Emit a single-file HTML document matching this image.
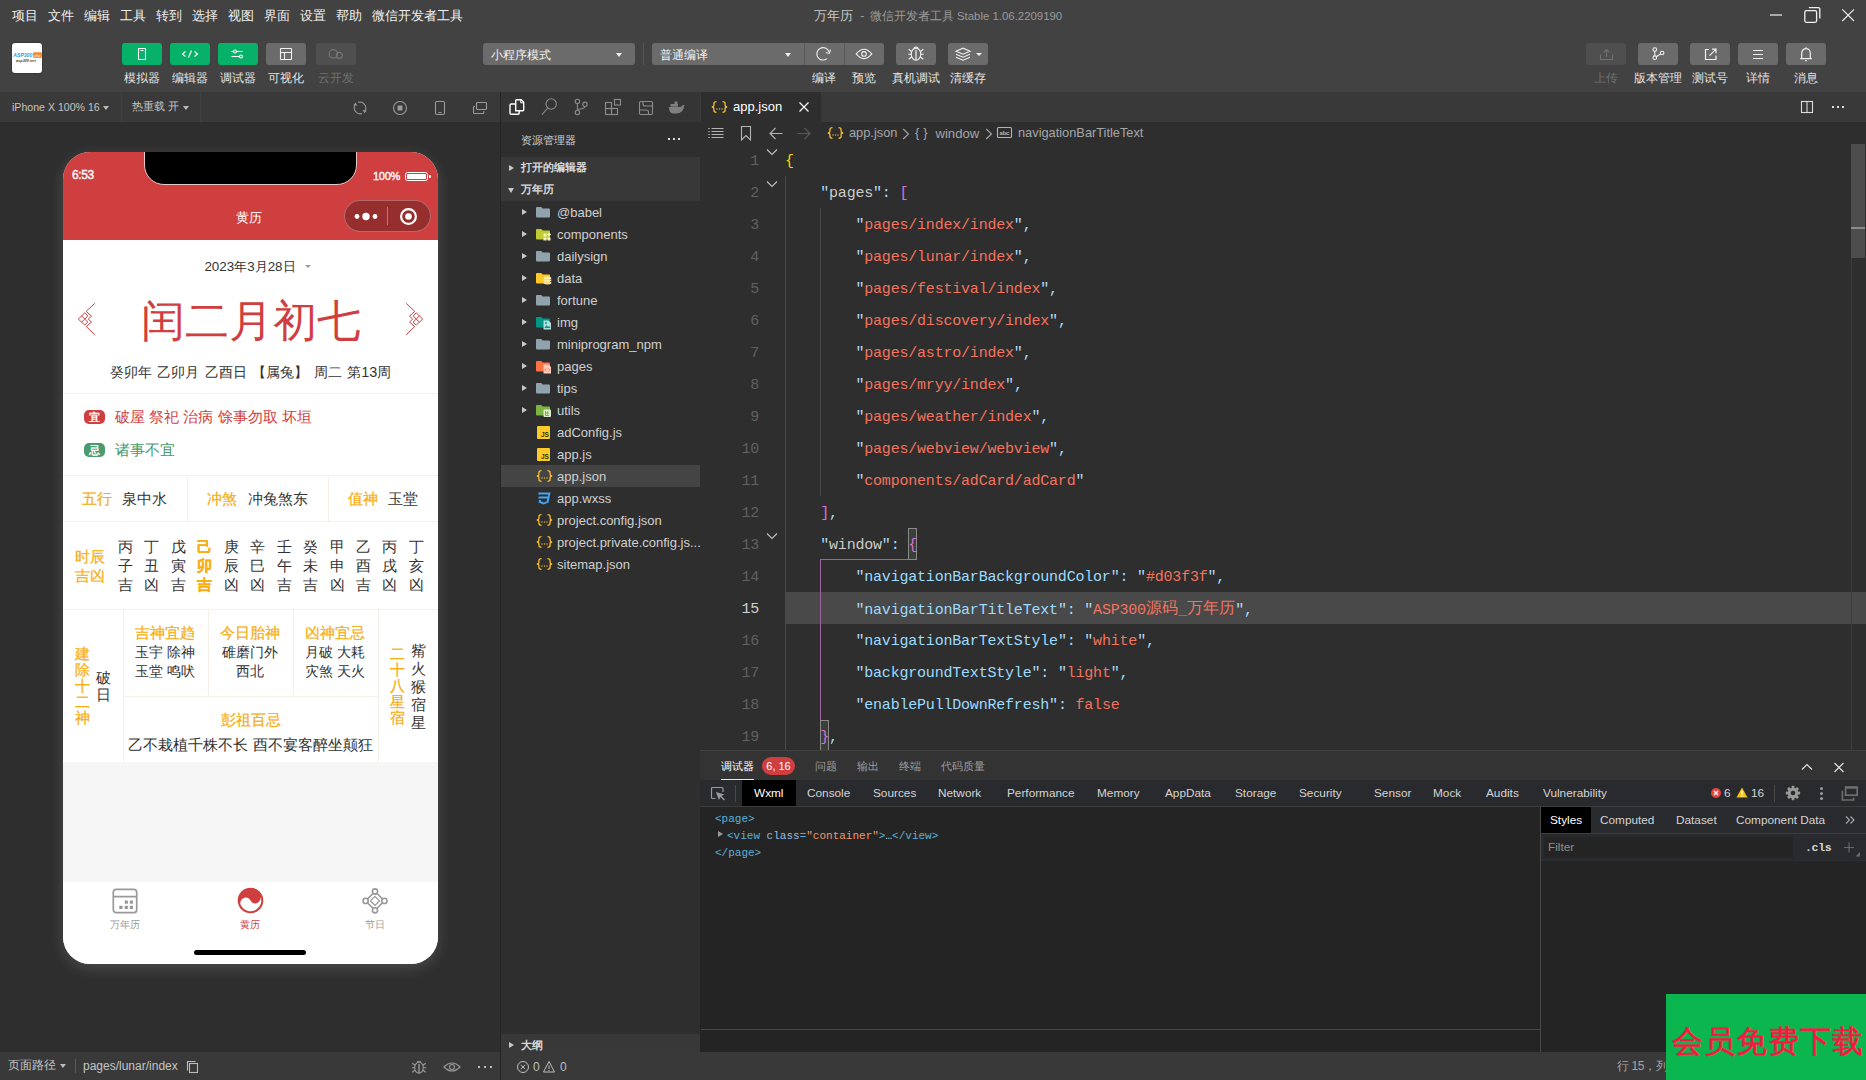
<!DOCTYPE html>
<html lang="zh">
<head>
<meta charset="utf-8">
<title>万年历 - 微信开发者工具</title>
<style>
*{box-sizing:border-box;margin:0;padding:0}
html,body{width:1866px;height:1080px;overflow:hidden;background:#2e2e2e;font-family:"Liberation Sans",sans-serif;}
body{position:relative;color:#ddd;font-size:12px}
.abs{position:absolute}
.t{position:absolute;white-space:nowrap;line-height:1}
svg{position:absolute;overflow:visible}
/* top */
#menubar{left:0;top:0;width:1866px;height:92px;background:#424242}
.menu{top:8.500px;font-size:13.300px;color:#f0f0f0}
#title{top:9px;left:814px;font-size:12.5px;color:#9a9a9a}
.tb{height:22px;top:43px;border-radius:3px}
.tb.g{background:#07b168}
.tb.gr{background:#6b6b6b}
.tb.dim{background:#4f4f4f}
.tl{top:72px;font-size:12px;color:#e4e4e4;text-align:center}
.tl.dim{color:#6f6f6f}
/* second bar */
#bar2{left:0;top:92px;width:1866px;height:30px;background:#393939}
#simbg{left:0;top:122px;width:500px;height:930px;background:#2e2e2e}
#vdiv{left:500px;top:92px;width:1px;height:988px;background:#252525}
#status{left:0;top:1052px;width:1866px;height:28px;background:#393939}
</style>
</head>
<body>
<svg width="0" height="0" style="position:absolute"><defs>
<symbol id="json" viewBox="0 0 17 12"><g fill="none" stroke="#f8bc2c" stroke-width="1.300"><path d="M5.500 0.700c-2.200 0-2.600 0.700-2.600 2v1.600c0 1.100-0.700 1.700-2.100 1.700c1.400 0 2.100 0.600 2.100 1.700v1.600c0 1.300 0.400 2 2.600 2"/><path d="M11.500 0.700c2.200 0 2.600 0.700 2.600 2v1.600c0 1.100 0.700 1.700 2.100 1.700c-1.400 0-2.100 0.600-2.100 1.700v1.600c0 1.300-0.400 2-2.600 2"/></g><g fill="#f8bc2c"><rect x="5.400" y="7.400" width="1.200" height="1.200"/><rect x="7.900" y="7.400" width="1.200" height="1.200"/><rect x="10.400" y="7.400" width="1.200" height="1.200"/></g></symbol>
</defs></svg>
<div id="menubar" class="abs"></div>
<div id="bar2" class="abs"></div>
<div id="simbg" class="abs"></div>
<div id="status" class="abs"></div>
<div id="vdiv" class="abs"></div>
<div class="t menu" style="left:12px">项目</div>
<div class="t menu" style="left:48px">文件</div>
<div class="t menu" style="left:84px">编辑</div>
<div class="t menu" style="left:120px">工具</div>
<div class="t menu" style="left:156px">转到</div>
<div class="t menu" style="left:192px">选择</div>
<div class="t menu" style="left:228px">视图</div>
<div class="t menu" style="left:264px">界面</div>
<div class="t menu" style="left:300px">设置</div>
<div class="t menu" style="left:336px">帮助</div>
<div class="t menu" style="left:372px">微信开发者工具</div>
<div class="t" id="title"><span style="color:#c8c8c8;font-size:13px">万年历</span><span style="font-size:12px;margin-left:4px"> - </span><span style="font-size:12px;margin-left:2px">微信开发者工具 </span><span style="font-size:11.400px">Stable 1.06.2209190</span></div>
<svg style="left:1760px;top:0" width="106" height="30" viewBox="0 0 106 30" fill="none" stroke="#f0f0f0" stroke-width="1.300">
<rect x="10" y="14" width="12" height="2" fill="#aaaaaa" stroke="none"/>
<rect x="44.800" y="10.700" width="11.800" height="11.600" rx="1.500"/><path d="M48.800 7.600h9.500a1.500 1.500 0 0 1 1.500 1.500v9.300"/>
<path d="M82.300 9.300l11.700 11.700M94 9.300l-11.700 11.700" stroke-width="1.100"/></svg>
<div class="abs" style="left:12px;top:43px;width:30px;height:30px;background:#fff;border-radius:3px;box-shadow:0 0 0 0.700px #353535"></div>
<svg style="left:12px;top:43px" width="30" height="30" viewBox="0 0 30 30"><text x="1.300" y="14.300" font-family="Liberation Sans, sans-serif" font-size="5.600" font-weight="bold" font-style="italic" fill="#2c9bd6" textLength="19" lengthAdjust="spacingAndGlyphs">ASP300</text><rect x="21.200" y="9.200" width="8.600" height="5.800" rx="1" fill="#f5862a"/><text x="22.400" y="13.600" font-family="Liberation Sans, sans-serif" font-size="3.600" font-weight="bold" font-style="italic" fill="#ffe3c4" textLength="6.200" lengthAdjust="spacingAndGlyphs">php</text><text x="4.100" y="18.700" font-family="Liberation Sans, sans-serif" font-size="3.400" font-weight="bold" font-style="italic" fill="#444" textLength="19.600" lengthAdjust="spacingAndGlyphs">asp300.net</text></svg>
<div class="abs tb g" style="left:122px;width:40px"></div>
<div class="t tl" style="left:102px;width:80px">模拟器</div>
<div class="abs tb g" style="left:170px;width:40px"></div>
<div class="t tl" style="left:150px;width:80px">编辑器</div>
<div class="abs tb g" style="left:218px;width:40px"></div>
<div class="t tl" style="left:198px;width:80px">调试器</div>
<div class="abs tb gr" style="left:266px;width:40px"></div>
<div class="t tl" style="left:246px;width:80px">可视化</div>
<div class="abs tb dim" style="left:316px;width:40px"></div>
<div class="t tl dim" style="left:295.500px;width:80px">云开发</div>
<svg style="left:122px;top:43px" width="232" height="22" viewBox="0 0 232 22" fill="none" stroke="#fff" stroke-width="1.1">
<rect x="16.500" y="5.500" width="7" height="11" rx="0.5"/><path d="M18.500 7.500h3"/>
<path d="M63.500 8.500l-3 2.500l3 2.500M72.500 8.500l3 2.500l-3 2.500M69.500 7.500l-3 7"/>
<circle cx="113" cy="8.500" r="1.5"/><path d="M114.500 8.500h6M109.500 8.500h2"/><circle cx="119" cy="13.500" r="1.500"/><path d="M109.500 13.500h8"/>
<g stroke="#f2f2f2"><rect x="158.500" y="5.500" width="11" height="11" rx="0.5"/><path d="M158.500 9.500h11M162.500 9.500v7"/></g>
<g stroke="#777"><circle cx="211.300" cy="10.800" r="4.200"/><circle cx="217.300" cy="12.400" r="3"/></g>
</svg>
<div class="abs tb gr" style="left:483px;width:152px"></div><div class="t" style="left:491px;top:49px;font-size:12px;color:#f2f2f2">小程序模式</div>
<div class="abs" style="left:616px;top:53px;border:3px solid transparent;border-top:4px solid #eee;border-bottom:0"></div>
<div class="abs" style="left:643px;top:43px;width:1px;height:22px;background:#555"></div>
<div class="abs tb gr" style="left:652px;width:232px"></div><div class="t" style="left:660px;top:49px;font-size:12px;color:#f2f2f2">普通编译</div>
<div class="abs" style="left:785px;top:53px;border:3px solid transparent;border-top:4px solid #eee;border-bottom:0"></div>
<div class="abs" style="left:804px;top:43px;width:1px;height:22px;background:#5a5a5a"></div><div class="abs" style="left:844px;top:43px;width:1px;height:22px;background:#5a5a5a"></div>
<div class="abs tb gr" style="left:896px;width:40px"></div><div class="abs tb gr" style="left:948px;width:40px"></div>
<div class="t tl" style="left:784px;width:80px">编译</div>
<div class="t tl" style="left:824px;width:80px">预览</div>
<div class="t tl" style="left:876px;width:80px">真机调试</div>
<div class="t tl" style="left:928px;width:80px">清缓存</div>
<svg style="left:804px;top:43px" width="184" height="22" viewBox="0 0 184 22" fill="none" stroke="#f0f0f0" stroke-width="1.100">
<path d="M23 15.600A6.200 6.200 0 1 1 24.900 8.800"/><path d="M21.800 9.700l3.700 0.500l0.900-3.500"/>
<path d="M52.200 10.900q7.800-9.400 15.600 0q-7.800 9.400-15.600 0z"/><circle cx="60" cy="10.900" r="2.300"/>
<ellipse cx="112" cy="11.200" rx="4.800" ry="6"/><path d="M109.700 5.800a2.400 2.400 0 0 1 4.600 0"/><path d="M112 7v10" stroke-width="1.500" stroke="#d8d8d8"/><path d="M107.500 8.500l-2.800-2.200M107.200 11.200h-3M107.500 14l-2.800 2.200M116.500 8.500l2.800-2.200M116.800 11.200h3M116.500 14l2.800 2.200"/>
<path d="M152 8.200l7-3l7 3l-7 3z"/><path d="M152 11.200l7 3l7-3M152 14.200l7 3l7-3"/>
</svg>
<div class="abs" style="left:975.500px;top:53px;border:3px solid transparent;border-top:3.500px solid #eee;border-bottom:0"></div>
<div class="abs tb dim" style="left:1586px;width:40px"></div>
<div class="t tl dim" style="left:1566px;width:80px">上传</div>
<div class="abs tb gr" style="left:1638px;width:40px"></div>
<div class="t tl" style="left:1618px;width:80px">版本管理</div>
<div class="abs tb gr" style="left:1690px;width:40px"></div>
<div class="t tl" style="left:1670px;width:80px">测试号</div>
<div class="abs tb gr" style="left:1738px;width:40px"></div>
<div class="t tl" style="left:1718px;width:80px">详情</div>
<div class="abs tb gr" style="left:1786px;width:40px"></div>
<div class="t tl" style="left:1766px;width:80px">消息</div>
<svg style="left:1586px;top:43px" width="240" height="22" viewBox="0 0 240 22" fill="none" stroke="#f0f0f0" stroke-width="1.100">
<g stroke="#707070"><path d="M14.500 11.500v5h12v-5M20.500 6.500v7.500M17.700 9.300l2.800-2.800l2.800 2.800"/></g>
<circle cx="68.800" cy="6.600" r="1.800"/><circle cx="68.800" cy="14.700" r="1.800"/><circle cx="76.100" cy="10" r="1.800"/><path d="M68.800 8.400v4.500M74.500 11l-4.200 2.700"/>
<path d="M123 6.500h-3.500v10h10.500v-4M123.500 12.700l6.300-6.300M126 6.200h4v4" stroke-width="1.200"/>
<path d="M167 7.500h10M167 11.500h10M167 15.500h10" stroke-width="1.200"/>
<path d="M215.700 15.500v-5.500a4.300 4.300 0 0 1 8.600 0v5.500M214.200 15.600h11.600M219.200 17.600h1.600M220 5.500v-1.300" stroke-width="1.200"/>
</svg>
<!--TOPBAR2-->
<div class="t" style="left:12px;top:102px;font-size:10.600px;color:#c4c4c4">iPhone X 100% 16</div>
<div class="abs" style="left:103px;top:106px;border:3px solid transparent;border-top:4px solid #bbb;border-bottom:0"></div>
<div class="abs" style="left:121px;top:92px;width:1px;height:30px;background:#3f3f3f"></div><div class="abs" style="left:200px;top:92px;width:1px;height:30px;background:#3f3f3f"></div>
<div class="t" style="left:132px;top:101px;font-size:11.400px;color:#c4c4c4">热重载 开</div>
<div class="abs" style="left:183px;top:106px;border:3px solid transparent;border-top:4px solid #bbb;border-bottom:0"></div>
<svg style="left:340px;top:92px" width="160" height="30" viewBox="0 0 160 30" fill="none" stroke="#9a9a9a" stroke-width="1.1">
<path d="M17.900 10.300A6 6 0 0 1 25.200 18.500M22.050 21.500A6 6 0 0 1 14.800 13.300"/><path d="M24.600 21.300l-1.900-3.300l3.900 0.600zM15.400 10.500l1.900 3.300l-3.900-0.600z" fill="#9a9a9a" stroke="none"/>
<circle cx="60" cy="16" r="6.500"/><rect x="57.500" y="13.500" width="5" height="5" fill="#9a9a9a" stroke="none"/>
<rect x="95.500" y="9.500" width="9" height="13" rx="1.200"/><path d="M98.500 20.500h3"/>
<rect x="136.500" y="10.500" width="10" height="7" rx="0.800"/><path d="M135 14.500h-0.700a0.800 0.800 0 0 0-0.800 0.800v5.400a0.800 0.800 0 0 0 0.800 0.800h8.700a0.800 0.800 0 0 0 0.800-0.800v-1.700"/>
</svg>
<style>
#phone{left:63px;top:152px;width:375px;height:812px;border-radius:27px;background:#f6f6f6;overflow:hidden;box-shadow:0 4px 14px 1px rgba(255,255,255,.13)}
#phone .t{color:#333}
.y{color:#f7ae14 !important;-webkit-text-stroke:0.250px #f7ae14}
.r{color:#d03f3f !important}
.c{text-align:center}
.ln{position:absolute;background:#f6f0ea}
</style>
<div id="phone" class="abs">
<div class="abs" style="left:0;top:0;width:375px;height:88px;background:#d03f3f"></div>
<div class="abs" style="left:81px;top:-20px;width:213px;height:53px;background:#000;border-radius:0 0 20px 20px;border:1px solid #e8c9c9"></div>
<div class="t" style="left:9px;top:17px;font-size:12px;-webkit-text-stroke:0.350px #fff;letter-spacing:-0.400px"><span style="color:#fff">6:53</span></div>
<div class="t" style="left:310px;top:19px;font-size:11px;-webkit-text-stroke:0.350px #fff;letter-spacing:-0.300px"><span style="color:#fff">100%</span></div>
<div class="abs" style="left:342px;top:20px;width:23px;height:9px;border:1px solid #fff;border-radius:2.500px"></div>
<div class="abs" style="left:344px;top:22px;width:19px;height:5px;background:#fff;border-radius:1px"></div>
<div class="abs" style="left:366px;top:23px;width:2px;height:3px;background:#fff;border-radius:0 1px 1px 0"></div>
<div class="t c" style="left:0;width:372px;top:59px;font-size:13px;font-weight:500"><span style="color:#fff">黄历</span></div>
<div class="abs" style="left:281px;top:48px;width:87px;height:32px;border-radius:16px;background:rgba(0,0,0,.27);border:1px solid rgba(255,255,255,.28)"></div>
<div class="abs" style="left:324px;top:55px;width:1px;height:18px;background:rgba(255,255,255,.35)"></div>
<svg style="left:281px;top:48px" width="87" height="32" viewBox="0 0 87 32"><circle cx="13" cy="16.500" r="2.400" fill="#fff"/><circle cx="22" cy="16.500" r="3.700" fill="#fff"/><circle cx="31" cy="16.500" r="2.400" fill="#fff"/><circle cx="64.500" cy="16.500" r="7.400" fill="none" stroke="#fff" stroke-width="2.200"/><circle cx="64.500" cy="16.500" r="3.300" fill="#fff"/></svg>
<div class="abs" style="left:0;top:88px;width:375px;height:522px;background:#fff"></div>
<div class="t c" style="left:0;width:374px;top:108px;font-size:13.400px">2023年3月28日</div>
<div class="abs" style="left:242px;top:113px;border:3px solid transparent;border-top:3px solid #999;border-bottom:0"></div>
<div class="t c r" style="left:0;width:375px;top:147px;font-size:44px">闰二月初七</div>
<svg style="left:7px;top:143px" width="40" height="50" viewBox="0 0 40 50" fill="none" stroke="#d03f3f" stroke-width="1"><path d="M24.800 8.300L16.200 16.400L21.500 21.100L18.300 24.100L21.500 27.100L16.200 31.500L24.800 39.600"/><path d="M14.800 17.800L17.800 20.800L14.800 24.100L17.800 27.100L14.800 30.100L8.300 24.100z"/><path d="M11.600 20.800L14.800 24.100L11.600 27.100"/></svg>
<svg style="left:328px;top:143px" width="40" height="50" viewBox="0 0 40 50" fill="none" stroke="#d03f3f" stroke-width="1"><g transform="translate(40,0) scale(-1,1)"><path d="M24.800 8.300L16.200 16.400L21.500 21.100L18.300 24.100L21.500 27.100L16.200 31.500L24.800 39.600"/><path d="M14.800 17.800L17.800 20.800L14.800 24.100L17.800 27.100L14.800 30.100L8.300 24.100z"/><path d="M11.600 20.800L14.800 24.100L11.600 27.100"/></g></svg>
<div class="t c" style="left:0;width:375px;top:213px;font-size:14.400px;word-spacing:1.500px">癸卯年 乙卯月 乙酉日 【属兔】 周二 第13周</div>
<div class="ln" style="left:0;top:241px;width:375px;height:1px"></div>
<div class="abs" style="left:21px;top:258px;width:21px;height:14px;border-radius:5px;background:#d03f3f"></div>
<div class="t c" style="left:21px;width:21px;top:259.500px;font-size:11px;-webkit-text-stroke:0.400px #fff"><span style="color:#fff">宜</span></div>
<div class="t r" style="left:52px;top:257px;font-size:15px">破屋 祭祀 治病 馀事勿取 坏垣</div>
<div class="abs" style="left:21px;top:291px;width:21px;height:14px;border-radius:5px;background:#4a9a6e"></div>
<div class="t c" style="left:21px;width:21px;top:292.500px;font-size:11px;-webkit-text-stroke:0.400px #fff"><span style="color:#fff">忌</span></div>
<div class="t" style="left:52px;top:290px;font-size:15px"><span style="color:#4a9a6e">诸事不宜</span></div>
<div class="ln" style="left:0;top:323px;width:375px;height:1px"></div>
<div class="ln" style="left:124px;top:323px;width:1px;height:46px"></div>
<div class="ln" style="left:265px;top:323px;width:1px;height:46px"></div>
<div class="t y" style="left:19px;top:339px;font-size:15px">五行</div><div class="t" style="left:59px;top:339px;font-size:15px">泉中水</div>
<div class="t y" style="left:144px;top:339px;font-size:15px">冲煞</div><div class="t" style="left:185px;top:339px;font-size:15px">冲兔煞东</div>
<div class="t y" style="left:285px;top:339px;font-size:15px">值神</div><div class="t" style="left:325px;top:339px;font-size:15px">玉堂</div>
<div class="ln" style="left:0;top:369px;width:375px;height:1px"></div>
<div class="t y" style="left:12px;top:397px;font-size:15px">时辰</div><div class="t y" style="left:12px;top:416px;font-size:15px">吉凶</div>
<div class="t c" style="left:52px;width:20px;top:387px;font-size:15px">丙</div>
<div class="t c" style="left:52px;width:20px;top:406px;font-size:15px">子</div>
<div class="t c" style="left:52px;width:20px;top:425px;font-size:15px">吉</div>
<div class="t c" style="left:78px;width:20px;top:387px;font-size:15px">丁</div>
<div class="t c" style="left:78px;width:20px;top:406px;font-size:15px">丑</div>
<div class="t c" style="left:78px;width:20px;top:425px;font-size:15px">凶</div>
<div class="t c" style="left:105px;width:20px;top:387px;font-size:15px">戊</div>
<div class="t c" style="left:105px;width:20px;top:406px;font-size:15px">寅</div>
<div class="t c" style="left:105px;width:20px;top:425px;font-size:15px">吉</div>
<div class="t c y" style="left:131px;width:20px;top:387px;font-size:15px;font-weight:bold">己</div>
<div class="t c y" style="left:131px;width:20px;top:406px;font-size:15px;font-weight:bold">卯</div>
<div class="t c y" style="left:131px;width:20px;top:425px;font-size:15px;font-weight:bold">吉</div>
<div class="t c" style="left:158px;width:20px;top:387px;font-size:15px">庚</div>
<div class="t c" style="left:158px;width:20px;top:406px;font-size:15px">辰</div>
<div class="t c" style="left:158px;width:20px;top:425px;font-size:15px">凶</div>
<div class="t c" style="left:184px;width:20px;top:387px;font-size:15px">辛</div>
<div class="t c" style="left:184px;width:20px;top:406px;font-size:15px">巳</div>
<div class="t c" style="left:184px;width:20px;top:425px;font-size:15px">凶</div>
<div class="t c" style="left:211px;width:20px;top:387px;font-size:15px">壬</div>
<div class="t c" style="left:211px;width:20px;top:406px;font-size:15px">午</div>
<div class="t c" style="left:211px;width:20px;top:425px;font-size:15px">吉</div>
<div class="t c" style="left:237px;width:20px;top:387px;font-size:15px">癸</div>
<div class="t c" style="left:237px;width:20px;top:406px;font-size:15px">未</div>
<div class="t c" style="left:237px;width:20px;top:425px;font-size:15px">吉</div>
<div class="t c" style="left:264px;width:20px;top:387px;font-size:15px">甲</div>
<div class="t c" style="left:264px;width:20px;top:406px;font-size:15px">申</div>
<div class="t c" style="left:264px;width:20px;top:425px;font-size:15px">凶</div>
<div class="t c" style="left:290px;width:20px;top:387px;font-size:15px">乙</div>
<div class="t c" style="left:290px;width:20px;top:406px;font-size:15px">酉</div>
<div class="t c" style="left:290px;width:20px;top:425px;font-size:15px">吉</div>
<div class="t c" style="left:316px;width:20px;top:387px;font-size:15px">丙</div>
<div class="t c" style="left:316px;width:20px;top:406px;font-size:15px">戌</div>
<div class="t c" style="left:316px;width:20px;top:425px;font-size:15px">凶</div>
<div class="t c" style="left:343px;width:20px;top:387px;font-size:15px">丁</div>
<div class="t c" style="left:343px;width:20px;top:406px;font-size:15px">亥</div>
<div class="t c" style="left:343px;width:20px;top:425px;font-size:15px">凶</div>
<div class="ln" style="left:0;top:457px;width:375px;height:1px"></div>
<div class="ln" style="left:60px;top:457px;width:1px;height:153px"></div>
<div class="ln" style="left:145px;top:457px;width:1px;height:87px"></div>
<div class="ln" style="left:230px;top:457px;width:1px;height:87px"></div>
<div class="ln" style="left:315px;top:457px;width:1px;height:153px"></div>
<div class="ln" style="left:60px;top:544px;width:255px;height:1px"></div>
<div class="t c y" style="left:9px;width:20px;top:494px;font-size:15px">建</div>
<div class="t c y" style="left:9px;width:20px;top:510px;font-size:15px">除</div>
<div class="t c y" style="left:9px;width:20px;top:526px;font-size:15px">十</div>
<div class="t c y" style="left:9px;width:20px;top:542px;font-size:15px">二</div>
<div class="t c y" style="left:9px;width:20px;top:558px;font-size:15px">神</div>
<div class="t c" style="left:30px;width:20px;top:518px;font-size:15px">破</div><div class="t c" style="left:30px;width:20px;top:535px;font-size:15px">日</div>
<div class="t c y" style="left:324px;width:20px;top:493.5px;font-size:15px">二</div>
<div class="t c y" style="left:324px;width:20px;top:509.5px;font-size:15px">十</div>
<div class="t c y" style="left:324px;width:20px;top:525.5px;font-size:15px">八</div>
<div class="t c y" style="left:324px;width:20px;top:541.5px;font-size:15px">星</div>
<div class="t c y" style="left:324px;width:20px;top:557.5px;font-size:15px">宿</div>
<div class="t c" style="left:345px;width:20px;top:491px;font-size:15px">觜</div>
<div class="t c" style="left:345px;width:20px;top:509px;font-size:15px">火</div>
<div class="t c" style="left:345px;width:20px;top:527px;font-size:15px">猴</div>
<div class="t c" style="left:345px;width:20px;top:545px;font-size:15px">宿</div>
<div class="t c" style="left:345px;width:20px;top:563px;font-size:15px">星</div>
<div class="t c y" style="left:57px;width:90px;top:473px;font-size:15px">吉神宜趋</div>
<div class="t c" style="left:57px;width:90px;top:493px;font-size:14px">玉宇 除神</div>
<div class="t c" style="left:57px;width:90px;top:512px;font-size:14px">玉堂 鸣吠</div>
<div class="t c y" style="left:142px;width:90px;top:473px;font-size:15px">今日胎神</div>
<div class="t c" style="left:142px;width:90px;top:493px;font-size:14px">碓磨门外</div>
<div class="t c" style="left:142px;width:90px;top:512px;font-size:14px">西北</div>
<div class="t c y" style="left:227px;width:90px;top:473px;font-size:15px">凶神宜忌</div>
<div class="t c" style="left:227px;width:90px;top:493px;font-size:14px">月破 大耗</div>
<div class="t c" style="left:227px;width:90px;top:512px;font-size:14px">灾煞 天火</div>
<div class="t c y" style="left:60px;width:255px;top:560px;font-size:15px">彭祖百忌</div>
<div class="t c" style="left:50px;width:275px;top:585px;font-size:15px">乙不栽植千株不长 酉不宴客醉坐颠狂</div>
<div class="abs" style="left:0;top:729.500px;width:375px;height:84px;background:#fff"></div>
<svg style="left:49px;top:736px" width="26" height="26" viewBox="0 0 26 26" fill="none" stroke="#999" stroke-width="1.700"><rect x="1.300" y="1.300" width="23.400" height="23.400" rx="3"/><path d="M1.300 8.600h23.400"/><g fill="#999" stroke="none"><rect x="17.800" y="12.600" width="3.200" height="3.200" rx="0.500"/><rect x="12.700" y="12.600" width="3.200" height="3.200" rx="0.500"/><rect x="17.800" y="17.700" width="3.200" height="3.200" rx="0.500"/><rect x="12.700" y="17.700" width="3.200" height="3.200" rx="0.500"/><rect x="7.300" y="17.700" width="3.200" height="3.200" rx="0.500"/></g></svg>
<div class="t c" style="left:32px;width:60px;top:768px;font-size:10px"><span style="color:#999">万年历</span></div>
<svg style="left:173.500px;top:734.800px" width="27" height="27" viewBox="-13.500 -13.500 27 27"><circle cx="0" cy="0" r="12.800" fill="#d03f3f"/><path d="M-10.800 0A10.800 10.800 0 0 0 10.800 0A5.400 5.400 0 0 1 0 0A5.400 5.400 0 0 0 -10.800 0Z" fill="#fff" transform="rotate(-28)"/></svg>
<div class="t c" style="left:157px;width:60px;top:768px;font-size:10px;font-weight:500"><span style="color:#d03f3f">黄历</span></div>
<svg style="left:298px;top:735px" width="28" height="28" viewBox="0 0 28 28" fill="none" stroke="#999" stroke-width="1.600"><circle cx="14" cy="4.500" r="2.600"/><circle cx="14" cy="23.300" r="2.600"/><circle cx="4.600" cy="13.900" r="2.600"/><circle cx="23.400" cy="13.900" r="2.600"/><path d="M12.200 6.300l-5.800 5.800M15.800 6.300l5.800 5.800M6.400 15.700l5.800 5.800M21.600 15.700l-5.800 5.800"/><path d="M14 9.400l4.500 4.500l-4.500 4.500l-4.500-4.500z" stroke-width="1.300"/></svg>
<div class="t c" style="left:282px;width:60px;top:768px;font-size:10px"><span style="color:#999">节日</span></div>
<div class="abs" style="left:131px;top:798px;width:112px;height:5px;border-radius:3px;background:#000"></div>
</div>
<style>
#exp{left:501px;top:122px;width:199px;height:930px;background:#2e2e2e}
.row{position:absolute;left:501px;width:199px;height:22px}
.lbl{position:absolute;white-space:nowrap;line-height:1;font-size:13px;color:#d0d0d0}
.hd{position:absolute;white-space:nowrap;line-height:1;font-size:11px;color:#d8d8d8;font-weight:bold}
.tri-r{position:absolute;width:0;height:0;border:3.500px solid transparent;border-left:5px solid #c8c8c8;border-right:0}
.tri-d{position:absolute;width:0;height:0;border:3.500px solid transparent;border-top:5px solid #c8c8c8;border-bottom:0}
</style>
<div class="abs" style="left:501px;top:92px;width:199px;height:30px;background:#353535"></div>
<svg style="left:500px;top:92px" width="200" height="30" viewBox="0 0 200 30" fill="none" stroke="#8c8c8c" stroke-width="1.100">
<g stroke="#ffffff" stroke-width="1.400"><path d="M15.700 18.800v-10.300a0.800 0.800 0 0 1 0.800-0.800h4.700l2.500 2.600v7.700a0.800 0.800 0 0 1-0.800 0.800h-7.200z"/><path d="M20.700 8v2.800h2.800" stroke-width="1"/><path d="M15.200 12h-4a1.200 1.200 0 0 0-1.200 1.200v7.800a1.200 1.200 0 0 0 1.200 1.200h6.800a1.200 1.200 0 0 0 1.200-1.200v-2"/></g>
<circle cx="51.200" cy="12" r="5.200"/><path d="M47.700 16l-5.700 6.700"/>
<circle cx="77.400" cy="9.400" r="2.200"/><circle cx="77.400" cy="20.400" r="2.200"/><circle cx="85" cy="12.300" r="2.200"/><path d="M77.400 11.600v6.600M85 14.500q0 2.500-7.600 2.700"/>
<rect x="105.500" y="10.500" width="6" height="6"/><rect x="105.500" y="16.500" width="6" height="6"/><rect x="111.500" y="16.500" width="6" height="6"/><rect x="114.500" y="7.500" width="6" height="5.500"/>
<rect x="139.500" y="9.500" width="13" height="13" rx="1.200"/><path d="M143 9.500v2.500q0 2 2 2h7.500M139.500 18h7q2 0 2 2v2.500"/>
<g transform="translate(0,-0.500)"><path d="M168.800 15.500h12q1.500-2.500 4-1.800q-1.500 1.300-1 2.500q-1.200 5.300-7.300 5.800h-3.500q-3.700-0.500-4.200-6.500z" fill="#808080" stroke="none"/><rect x="170.500" y="12.500" width="7.500" height="2.600" fill="#808080" stroke="none"/><rect x="174.500" y="10" width="3" height="2.500" fill="#808080" stroke="none"/></g>
</svg>
<div class="t" style="left:521px;top:134.700px;font-size:11px;color:#cfcfcf">资源管理器</div>
<div class="abs" style="left:668px;top:138px;width:2px;height:2px;background:#ddd;box-shadow:5px 0 #ddd,10px 0 #ddd"></div>
<div class="row" style="top:157px;height:44px;background:#383838"></div>
<div class="tri-r" style="left:509px;top:164.500px"></div><div class="hd" style="left:521px;top:162px">打开的编辑器</div>
<div class="tri-d" style="left:508px;top:187.500px"></div><div class="hd" style="left:521px;top:184px">万年历</div>
<div class="row" style="top:465px;background:#444444"></div>
<div class="tri-r" style="left:521.800px;top:208.5px"></div>
<svg style="left:536px;top:206.5px" width="16" height="12" viewBox="0 0 16 12"><path d="M1 0h4.200l1.500 1.500h6.300a1 1 0 0 1 1 1v7a1 1 0 0 1-1 1h-12a1 1 0 0 1-1-1v-8.500a1 1 0 0 1 1-1z" fill="#90a4ae"/></svg>
<div class="lbl" style="left:557px;top:206px">@babel</div>
<div class="tri-r" style="left:521.800px;top:230.5px"></div>
<svg style="left:536px;top:228.5px" width="16" height="12" viewBox="0 0 16 12"><path d="M1 0h4.200l1.500 1.500h6.300a1 1 0 0 1 1 1v7a1 1 0 0 1-1 1h-12a1 1 0 0 1-1-1v-8.500a1 1 0 0 1 1-1z" fill="#c0ca33"/></svg>
<svg style="left:543px;top:233.0px" width="9" height="9" viewBox="0 0 9 9" fill="#f0f4c3"><rect x="0.500" y="0.500" width="3" height="3"/><rect x="0.500" y="4.500" width="3" height="3"/><rect x="4.500" y="4.500" width="3" height="3"/><rect x="4.500" y="0" width="3" height="3" transform="rotate(45 6 1.500)"/></svg>
<div class="lbl" style="left:557px;top:228px">components</div>
<div class="tri-r" style="left:521.800px;top:252.5px"></div>
<svg style="left:536px;top:250.5px" width="16" height="12" viewBox="0 0 16 12"><path d="M1 0h4.200l1.500 1.500h6.300a1 1 0 0 1 1 1v7a1 1 0 0 1-1 1h-12a1 1 0 0 1-1-1v-8.500a1 1 0 0 1 1-1z" fill="#90a4ae"/></svg>
<div class="lbl" style="left:557px;top:250px">dailysign</div>
<div class="tri-r" style="left:521.800px;top:274.5px"></div>
<svg style="left:536px;top:272.5px" width="16" height="12" viewBox="0 0 16 12"><path d="M1 0h4.200l1.500 1.500h6.300a1 1 0 0 1 1 1v7a1 1 0 0 1-1 1h-12a1 1 0 0 1-1-1v-8.500a1 1 0 0 1 1-1z" fill="#ffca28"/></svg>
<svg style="left:543px;top:276.0px" width="9" height="10" viewBox="0 0 9 10" fill="#ffecb3"><ellipse cx="4.500" cy="2" rx="3.800" ry="1.600"/><path d="M0.700 3.200q3.800 2 7.600 0v1.800q-3.800 2-7.600 0zM0.700 5.800q3.800 2 7.600 0v1.800q-3.800 2-7.600 0z"/></svg>
<div class="lbl" style="left:557px;top:272px">data</div>
<div class="tri-r" style="left:521.800px;top:296.5px"></div>
<svg style="left:536px;top:294.5px" width="16" height="12" viewBox="0 0 16 12"><path d="M1 0h4.200l1.500 1.500h6.300a1 1 0 0 1 1 1v7a1 1 0 0 1-1 1h-12a1 1 0 0 1-1-1v-8.500a1 1 0 0 1 1-1z" fill="#90a4ae"/></svg>
<div class="lbl" style="left:557px;top:294px">fortune</div>
<div class="tri-r" style="left:521.800px;top:318.5px"></div>
<svg style="left:536px;top:316.5px" width="16" height="12" viewBox="0 0 16 12"><path d="M1 0h4.200l1.500 1.500h6.300a1 1 0 0 1 1 1v7a1 1 0 0 1-1 1h-12a1 1 0 0 1-1-1v-8.500a1 1 0 0 1 1-1z" fill="#009688"/></svg>
<svg style="left:543px;top:320.0px" width="9" height="10" viewBox="0 0 9 10"><path d="M0.500 0.500h5l2.500 2.500v6.500h-7.500z" fill="#b2dfdb"/><path d="M1.500 8l2-3l1.500 2l1-1l1.500 2z" fill="#009688"/><circle cx="3" cy="3" r="0.900" fill="#009688"/></svg>
<div class="lbl" style="left:557px;top:316px">img</div>
<div class="tri-r" style="left:521.800px;top:340.5px"></div>
<svg style="left:536px;top:338.5px" width="16" height="12" viewBox="0 0 16 12"><path d="M1 0h4.200l1.500 1.500h6.300a1 1 0 0 1 1 1v7a1 1 0 0 1-1 1h-12a1 1 0 0 1-1-1v-8.500a1 1 0 0 1 1-1z" fill="#90a4ae"/></svg>
<div class="lbl" style="left:557px;top:338px">miniprogram_npm</div>
<div class="tri-r" style="left:521.800px;top:362.5px"></div>
<svg style="left:536px;top:360.5px" width="16" height="12" viewBox="0 0 16 12"><path d="M1 0h4.200l1.500 1.500h6.300a1 1 0 0 1 1 1v7a1 1 0 0 1-1 1h-12a1 1 0 0 1-1-1v-8.500a1 1 0 0 1 1-1z" fill="#ff7043"/></svg>
<svg style="left:543px;top:364.0px" width="9" height="10" viewBox="0 0 9 10"><path d="M0.500 0.500h5l2.500 2.500v6.500h-7.500z" fill="#ffccbc"/><path d="M3.200 4.500l-1.500 1.500l1.500 1.500M5.300 4.500l1.500 1.500l-1.500 1.500" fill="none" stroke="#ff7043" stroke-width="0.900"/></svg>
<div class="lbl" style="left:557px;top:360px">pages</div>
<div class="tri-r" style="left:521.800px;top:384.5px"></div>
<svg style="left:536px;top:382.5px" width="16" height="12" viewBox="0 0 16 12"><path d="M1 0h4.200l1.500 1.500h6.300a1 1 0 0 1 1 1v7a1 1 0 0 1-1 1h-12a1 1 0 0 1-1-1v-8.500a1 1 0 0 1 1-1z" fill="#90a4ae"/></svg>
<div class="lbl" style="left:557px;top:382px">tips</div>
<div class="tri-r" style="left:521.800px;top:406.5px"></div>
<svg style="left:536px;top:404.5px" width="16" height="12" viewBox="0 0 16 12"><path d="M1 0h4.200l1.500 1.500h6.300a1 1 0 0 1 1 1v7a1 1 0 0 1-1 1h-12a1 1 0 0 1-1-1v-8.500a1 1 0 0 1 1-1z" fill="#7cb342"/></svg>
<svg style="left:543px;top:409.0px" width="9" height="9" viewBox="0 0 9 9"><rect x="0.500" y="0.500" width="7.500" height="7.500" rx="1" fill="#dcedc8"/><path d="M2.500 2v4.500h3.500M4.500 2.500v3M3 4h3" fill="none" stroke="#7cb342" stroke-width="1"/></svg>
<div class="lbl" style="left:557px;top:404px">utils</div>
<div class="abs" style="left:537px;top:426px;width:13px;height:13px;background:#ffca28;border-radius:1px"></div><div class="t" style="left:541px;top:432px;font-size:6.500px;font-weight:bold;color:#3a3000;letter-spacing:-0.200px">JS</div>
<div class="lbl" style="left:557px;top:426px">adConfig.js</div>
<div class="abs" style="left:537px;top:448px;width:13px;height:13px;background:#ffca28;border-radius:1px"></div><div class="t" style="left:541px;top:454px;font-size:6.500px;font-weight:bold;color:#3a3000;letter-spacing:-0.200px">JS</div>
<div class="lbl" style="left:557px;top:448px">app.js</div>
<svg style="left:535.5px;top:470px" width="17" height="12"><use href="#json"/></svg>
<div class="lbl" style="left:557px;top:470px">app.json</div>
<svg style="left:536px;top:492px" width="15" height="13" viewBox="0 0 15 13"><path d="M2.500 0.500h12l-2 10l-5 2l-5-2l0.500-2.500h2l-0.200 1.200l3 1.200l3-1.200l0.500-2.700h-9l0.500-2h9l0.400-2h-10z" fill="#42a5f5"/></svg>
<div class="lbl" style="left:557px;top:492px">app.wxss</div>
<svg style="left:535.5px;top:514px" width="17" height="12"><use href="#json"/></svg>
<div class="lbl" style="left:557px;top:514px">project.config.json</div>
<svg style="left:535.5px;top:536px" width="17" height="12"><use href="#json"/></svg>
<div class="lbl" style="left:557px;top:536px">project.private.config.js...</div>
<svg style="left:535.5px;top:558px" width="17" height="12"><use href="#json"/></svg>
<div class="lbl" style="left:557px;top:558px">sitemap.json</div>
<div class="row" style="top:1034px;height:18px;background:#383838"></div>
<div class="tri-r" style="left:509px;top:1041.500px"></div><div class="hd" style="left:521px;top:1040px">大纲</div>
<style>
#edbg{left:700px;top:122px;width:1166px;height:629px;background:#2e2e2e}
.code{position:absolute;left:785px;letter-spacing:-0.200px;padding-top:2px;white-space:pre;font-family:"Liberation Mono",monospace;font-size:15px;line-height:32px;height:32px;color:#9cdcfe}
.ln-no{position:absolute;left:700px;width:59px;letter-spacing:-0.200px;padding-top:2px;text-align:right;font-family:"Liberation Mono",monospace;font-size:15px;line-height:32px;height:32px;color:#606060}
.k0{color:#cccccc}.k1{color:#9cdcfe}.q{color:#b5dcf5}.s{color:#f4735e}.p{color:#9cdcfe}
.bc{position:absolute;white-space:nowrap;line-height:1;font-size:12.800px;color:#a6a6a6;top:126.500px}
.fold{position:absolute;left:766px}
.guide{position:absolute;width:1px;background:#4a4a4a}
</style>
<div id="edbg" class="abs"></div>
<div class="abs" style="left:701px;top:92px;width:120px;height:30px;background:#2e2e2e"></div>
<svg style="left:710.5px;top:101px" width="17" height="12"><use href="#json"/></svg>
<div class="t" style="left:733px;top:100px;font-size:13px;color:#fff">app.json</div>
<svg style="left:798px;top:101px" width="12" height="12" viewBox="0 0 12 12" stroke="#fff" stroke-width="1.200"><path d="M1.500 1.500l9 9M10.500 1.500l-9 9"/></svg>
<svg style="left:1800px;top:100px" width="14" height="14" viewBox="0 0 14 14" fill="none" stroke="#ddd" stroke-width="1.100"><rect x="1.500" y="1.500" width="11" height="11"/><path d="M7 1.500v11"/></svg>
<div class="abs" style="left:1832px;top:106px;width:2px;height:2px;background:#ddd;box-shadow:5px 0 #ddd,10px 0 #ddd"></div>
<svg style="left:706px;top:123px" width="110" height="20" viewBox="0 0 110 20" fill="none" stroke="#b4b4b4" stroke-width="1.100">
<path d="M5.500 5.500h12M5.500 8.500h12M5.500 11.500h12M5.500 14.500h12M2.300 5.500h1.400M2.300 8.500h1.400M2.300 11.500h1.400M2.300 14.500h1.400"/>
<path d="M35.500 3.500h9v13.500l-4.500-4.500l-4.500 4.500z"/>
<path d="M64 10.500h12.500M69.500 5l-5.500 5.500l5.500 5.500"/>
<g stroke="#5a5a5a"><path d="M91.500 10.500h12.500M98.500 5l5.500 5.500l-5.500 5.500"/></g></svg>
<svg style="left:826.5px;top:127px" width="17" height="12"><use href="#json"/></svg>
<div class="bc" style="left:849px">app.json</div>
<svg style="left:902px;top:127.500px" width="8" height="12" viewBox="0 0 8 12" fill="none" stroke="#a6a6a6" stroke-width="1.100"><path d="M1.200 1l5.300 5l-5.300 5"/></svg>
<div class="bc" style="left:915px;letter-spacing:4px">{}</div>
<div class="bc" style="left:935.500px;font-size:13.100px">window</div>
<svg style="left:984.500px;top:127.500px" width="8" height="12" viewBox="0 0 8 12" fill="none" stroke="#a6a6a6" stroke-width="1.100"><path d="M1.200 1l5.300 5l-5.300 5"/></svg>
<svg style="left:997px;top:127px" width="15" height="12" viewBox="0 0 15 12" fill="none" stroke="#b4b4b4" stroke-width="1.100"><rect x="0.500" y="0.500" width="14" height="10" rx="1"/></svg><div class="t" style="left:999.500px;top:129.500px;font-size:6px;font-weight:bold;color:#b4b4b4;letter-spacing:-0.200px">abc</div>
<div class="bc" style="left:1018px">navigationBarTitleText</div>
<div class="abs" style="left:785px;top:592px;width:1081px;height:32px;background:#494949"></div>
<div class="guide" style="left:785px;top:176px;height:575px"></div>
<div class="guide" style="left:820px;top:208px;height:288px"></div>
<div class="guide" style="left:820px;top:560px;height:191px;background:#9e619e"></div>
<div class="abs" style="left:820px;top:559px;width:88px;height:1px;background:#9e619e"></div>
<div class="abs" style="left:908px;top:528px;width:9px;height:32px;border:1px solid #8a8a8a;background:#3a3f3a"></div>
<div class="abs" style="left:820px;top:720px;width:9px;height:31px;border:1px solid #8a8a8a;border-bottom:0;background:#3a3f3a"></div>
<div class="ln-no" style="top:144px;">1</div>
<div class="code" style="top:144px;"><span class=""><span style="color:#ffd700">{</span></span></div>
<div class="ln-no" style="top:176px;">2</div>
<div class="code" style="top:176px;">    <span class="q">"</span><span class="k0">pages</span><span class="q">"</span><span class="p">: </span><span style="color:#da70d6">[</span></div>
<div class="ln-no" style="top:208px;">3</div>
<div class="code" style="top:208px;">        <span class="q">"</span><span class="s">pages/index/index</span><span class="q">"</span><span class="p">,</span></div>
<div class="ln-no" style="top:240px;">4</div>
<div class="code" style="top:240px;">        <span class="q">"</span><span class="s">pages/lunar/index</span><span class="q">"</span><span class="p">,</span></div>
<div class="ln-no" style="top:272px;">5</div>
<div class="code" style="top:272px;">        <span class="q">"</span><span class="s">pages/festival/index</span><span class="q">"</span><span class="p">,</span></div>
<div class="ln-no" style="top:304px;">6</div>
<div class="code" style="top:304px;">        <span class="q">"</span><span class="s">pages/discovery/index</span><span class="q">"</span><span class="p">,</span></div>
<div class="ln-no" style="top:336px;">7</div>
<div class="code" style="top:336px;">        <span class="q">"</span><span class="s">pages/astro/index</span><span class="q">"</span><span class="p">,</span></div>
<div class="ln-no" style="top:368px;">8</div>
<div class="code" style="top:368px;">        <span class="q">"</span><span class="s">pages/mryy/index</span><span class="q">"</span><span class="p">,</span></div>
<div class="ln-no" style="top:400px;">9</div>
<div class="code" style="top:400px;">        <span class="q">"</span><span class="s">pages/weather/index</span><span class="q">"</span><span class="p">,</span></div>
<div class="ln-no" style="top:432px;">10</div>
<div class="code" style="top:432px;">        <span class="q">"</span><span class="s">pages/webview/webview</span><span class="q">"</span><span class="p">,</span></div>
<div class="ln-no" style="top:464px;">11</div>
<div class="code" style="top:464px;">        <span class="q">"</span><span class="s">components/adCard/adCard</span><span class="q">"</span></div>
<div class="ln-no" style="top:496px;">12</div>
<div class="code" style="top:496px;">    <span style="color:#da70d6">]</span><span class="p">,</span></div>
<div class="ln-no" style="top:528px;">13</div>
<div class="code" style="top:528px;">    <span class="q">"</span><span class="k0">window</span><span class="q">"</span><span class="p">: </span><span style="color:#da70d6">{</span></div>
<div class="ln-no" style="top:560px;">14</div>
<div class="code" style="top:560px;">        <span class="q">"</span><span class="k1">navigationBarBackgroundColor</span><span class="q">"</span><span class="p">: </span><span class="q">"</span><span class="s">#d03f3f</span><span class="q">"</span><span class="p">,</span></div>
<div class="ln-no" style="top:592px;;color:#d0d0d0">15</div>
<div class="code" style="top:592px;">        <span class="q">"</span><span class="k1">navigationBarTitleText</span><span class="q">"</span><span class="p">: </span><span class="q">"</span><span class="s">ASP300<span style="font-size:16px;letter-spacing:0.100px;position:relative;top:-1px">源码</span>_<span style="font-size:16px;letter-spacing:0.100px;position:relative;top:-1px">万年历</span></span><span class="q">"</span><span class="p">,</span></div>
<div class="ln-no" style="top:624px;">16</div>
<div class="code" style="top:624px;">        <span class="q">"</span><span class="k1">navigationBarTextStyle</span><span class="q">"</span><span class="p">: </span><span class="q">"</span><span class="s">white</span><span class="q">"</span><span class="p">,</span></div>
<div class="ln-no" style="top:656px;">17</div>
<div class="code" style="top:656px;">        <span class="q">"</span><span class="k1">backgroundTextStyle</span><span class="q">"</span><span class="p">: </span><span class="q">"</span><span class="s">light</span><span class="q">"</span><span class="p">,</span></div>
<div class="ln-no" style="top:688px;">18</div>
<div class="code" style="top:688px;">        <span class="q">"</span><span class="k1">enablePullDownRefresh</span><span class="q">"</span><span class="p">: </span><span class="s">false</span></div>
<div class="ln-no" style="top:720px;height:31px;overflow:hidden;">19</div>
<div class="code" style="top:720px;height:31px;overflow:hidden;">    <span style="color:#da70d6">}</span><span class="p">,</span></div>
<svg class="fold" style="top:147px" width="12" height="10" viewBox="0 0 12 10" fill="none" stroke="#c0c0c0" stroke-width="1.100"><path d="M1 2.500l5 5l5-5"/></svg>
<svg class="fold" style="top:179px" width="12" height="10" viewBox="0 0 12 10" fill="none" stroke="#c0c0c0" stroke-width="1.100"><path d="M1 2.500l5 5l5-5"/></svg>
<svg class="fold" style="top:531px" width="12" height="10" viewBox="0 0 12 10" fill="none" stroke="#c0c0c0" stroke-width="1.100"><path d="M1 2.500l5 5l5-5"/></svg>
<div class="abs" style="left:1851px;top:144px;width:1px;height:607px;background:#3c3c3c"></div>
<div class="abs" style="left:1851px;top:144px;width:14px;height:114px;background:#4d4d4d"></div>
<div class="abs" style="left:1851px;top:227px;width:14px;height:2px;background:#8a8a8a"></div>
<style>
#dbg{left:700px;top:750px;width:1166px;height:302px;background:#242424}
.dt{position:absolute;white-space:nowrap;line-height:1;font-size:11.800px;color:#d4d4d4;top:788.200px}
.pt{position:absolute;white-space:nowrap;line-height:1;font-size:11px;color:#9d9d9d;top:761px}
.wx{position:absolute;white-space:pre;line-height:1;font-family:"Liberation Mono",monospace;font-size:11px;color:#5db0d7}
</style>
<div id="dbg" class="abs"></div>
<div class="abs" style="left:700px;top:750px;width:1166px;height:1px;background:#414141"></div>
<div class="abs" style="left:700px;top:751px;width:1166px;height:29px;background:#333333"></div>
<div class="pt" style="left:721px;color:#fff">调试器</div><div class="abs" style="left:721px;top:779px;width:33px;height:1px;background:#e8e8e8"></div>
<div class="abs" style="left:762px;top:757px;width:33px;height:18px;border-radius:9px;background:#cf3f3f"></div><div class="t" style="left:762px;width:33px;text-align:center;top:761px;font-size:11px;color:#fff">6, 16</div>
<div class="pt" style="left:815px">问题</div>
<div class="pt" style="left:857px">输出</div>
<div class="pt" style="left:899px">终端</div>
<div class="pt" style="left:941px">代码质量</div>
<svg style="left:1800px;top:760px" width="46" height="14" viewBox="0 0 46 14" fill="none" stroke="#e0e0e0" stroke-width="1.200"><path d="M2 9.500l5-5l5 5"/><path d="M34.500 3l9 9M43.500 3l-9 9"/></svg>
<div class="abs" style="left:700px;top:780px;width:1166px;height:27px;background:#292a2d"></div>
<div class="abs" style="left:700px;top:806px;width:1166px;height:1px;background:#3d3d3d"></div>
<svg style="left:709px;top:785px" width="18" height="18" viewBox="0 0 18 18" fill="none" stroke="#9a9a9a" stroke-width="1.200"><path d="M6.500 13.500h-3a1 1 0 0 1-1-1v-9a1 1 0 0 1 1-1h9.500a1 1 0 0 1 1 1v3.500"/><path d="M6.900 7.100l3 8l1.500-3l3.500 3.500l1-1l-3.500-3.500l3-1.500z" fill="#9a9a9a" stroke="none"/></svg>
<div class="abs" style="left:735px;top:785px;width:1px;height:17px;background:#484848"></div>
<div class="abs" style="left:742px;top:780px;width:54px;height:26px;background:#000"></div>
<div class="dt" style="left:754px;color:#fff">Wxml</div>
<div class="dt" style="left:807px">Console</div>
<div class="dt" style="left:873px">Sources</div>
<div class="dt" style="left:938px">Network</div>
<div class="dt" style="left:1007px">Performance</div>
<div class="dt" style="left:1097px">Memory</div>
<div class="dt" style="left:1165px">AppData</div>
<div class="dt" style="left:1235px">Storage</div>
<div class="dt" style="left:1299px">Security</div>
<div class="dt" style="left:1374px">Sensor</div>
<div class="dt" style="left:1433px">Mock</div>
<div class="dt" style="left:1486px">Audits</div>
<div class="dt" style="left:1543px">Vulnerability</div>
<div class="abs" style="left:1711px;top:788px;width:10px;height:10px;border-radius:5px;background:#e8453c"></div><svg style="left:1711px;top:788px" width="10" height="10" viewBox="0 0 10 10" stroke="#fff" stroke-width="1.300"><path d="M3 3l4 4M7 3l-4 4"/></svg>
<div class="dt" style="left:1724px">6</div>
<svg style="left:1736px;top:787px" width="12" height="11" viewBox="0 0 12 11"><path d="M6 0.500l5.500 10h-11z" fill="#f5c211"/><path d="M6 3.800v3.800M6 8.600v1.100" stroke="#fff" stroke-width="1.300"/></svg>
<div class="dt" style="left:1751px">16</div>
<div class="abs" style="left:1774px;top:785px;width:1px;height:17px;background:#484848"></div>
<svg style="left:1785px;top:785px" width="16" height="16" viewBox="0 0 16 16"><g fill="#9a9a9a"><circle cx="8" cy="8" r="5.200"/><g id="teeth"><rect x="6.600" y="0.800" width="2.800" height="14.400" rx="0.600"/><rect x="6.600" y="0.800" width="2.800" height="14.400" rx="0.600" transform="rotate(45 8 8)"/><rect x="6.600" y="0.800" width="2.800" height="14.400" rx="0.600" transform="rotate(90 8 8)"/><rect x="6.600" y="0.800" width="2.800" height="14.400" rx="0.600" transform="rotate(135 8 8)"/></g></g><circle cx="8" cy="8" r="2.300" fill="#2a2a2a"/></svg>
<div class="abs" style="left:1819.500px;top:786.500px;width:3px;height:3px;border-radius:1.500px;background:#9a9a9a;box-shadow:0 5px #9a9a9a,0 10px #9a9a9a"></div>
<svg style="left:1841px;top:786px" width="18" height="16" viewBox="0 0 18 16" fill="none" stroke="#6e6e6e" stroke-width="1.700"><rect x="4.600" y="1.200" width="11.600" height="8"/><rect x="4.600" y="0.400" width="11.600" height="2.300" fill="#6e6e6e" stroke="none"/><path d="M1.400 4.700v9.300h11.200v-2.300"/></svg>
<div class="wx" style="left:715px;top:814px">&lt;page&gt;</div>
<div class="abs" style="left:718px;top:831px;width:0;height:0;border:3px solid transparent;border-left:5px solid #9a9a9a;border-right:0"></div>
<div class="wx" style="left:727px;top:831px">&lt;view <span style="color:#9bbbdc">class</span>=<span style="color:#f29766">"container"</span>&gt;<span style="color:#ccc">…</span>&lt;/view&gt;</div>
<div class="wx" style="left:715px;top:848px">&lt;/page&gt;</div>
<div class="abs" style="left:1540px;top:807px;width:1px;height:245px;background:#4a4a4a"></div>
<div class="abs" style="left:701px;top:1029px;width:839px;height:1px;background:#4a4a4a"></div>
<div class="abs" style="left:1541px;top:807px;width:325px;height:27px;background:#292a2d"></div>
<div class="abs" style="left:1541px;top:833px;width:325px;height:1px;background:#3d3d3d"></div>
<div class="abs" style="left:1541px;top:807px;width:50px;height:26px;background:#000"></div>
<div class="dt" style="left:1550px;top:815.200px;color:#fff">Styles</div>
<div class="dt" style="left:1600px;top:815.200px">Computed</div>
<div class="dt" style="left:1676px;top:815.200px">Dataset</div>
<div class="dt" style="left:1736px;top:815.200px">Component Data</div>
<svg style="left:1845px;top:815px" width="10" height="10" viewBox="0 0 10 10" fill="none" stroke="#aaa" stroke-width="1.100"><path d="M1 1.500l3.500 3.500l-3.500 3.500M5.500 1.500l3.500 3.500l-3.500 3.500"/></svg>
<div class="abs" style="left:1541px;top:834px;width:325px;height:26px;background:#292a2d"></div>
<div class="abs" style="left:1544px;top:837px;width:249px;height:21px;background:#242424"></div>
<div class="abs" style="left:1541px;top:860px;width:325px;height:1px;background:#2c2d30"></div>
<div class="dt" style="left:1548px;top:842.200px;color:#8f8f8f">Filter</div>
<div class="t" style="left:1805px;top:842px;font-family:'Liberation Mono',monospace;font-size:11.500px;font-weight:bold;color:#d8d8d8;letter-spacing:-0.300px">.cls</div>
<svg style="left:1843px;top:841px" width="16" height="14" viewBox="0 0 16 14" fill="none" stroke="#6a6a6a" stroke-width="1.100"><path d="M6 1.500v10M1 6.500h10"/><path d="M17 11v4.500h-4.500z" fill="#6a6a6a" stroke="none"/></svg>
<div class="t" style="left:8px;top:1059px;font-size:12px;color:#c4c4c4">页面路径</div>
<div class="abs" style="left:60px;top:1064px;border:3px solid transparent;border-top:4px solid #bbb;border-bottom:0"></div>
<div class="abs" style="left:75px;top:1059px;width:1px;height:14px;background:#5a5a5a"></div>
<div class="t" style="left:83px;top:1059.500px;font-size:12px;color:#c4c4c4">pages/lunar/index</div>
<svg style="left:186px;top:1060px" width="14" height="14" viewBox="0 0 14 14" fill="none" stroke="#bbb" stroke-width="1.100"><rect x="3.500" y="3.500" width="8" height="9"/><path d="M1.500 10.500v-9h8"/></svg>
<svg style="left:408px;top:1056px" width="90" height="22" viewBox="0 0 90 22" fill="none" stroke="#9a9a9a" stroke-width="1.100">
<ellipse cx="11" cy="11.700" rx="4.300" ry="5.500"/><path d="M9 6.700a2.100 2.100 0 0 1 4 0"/><path d="M11 8v9" stroke-width="1.400"/><path d="M6.900 9.200l-2.600-2M6.700 11.700h-2.800M6.900 14.200l-2.600 2M15.100 9.200l2.600-2M15.300 11.700h2.800M15.100 14.200l2.600 2"/>
<path d="M36 11q8-8 16 0q-8 8-16 0z"/><circle cx="44" cy="11" r="2.500"/>
<g fill="#bbb" stroke="none"><rect x="70" y="10" width="2" height="2"/><rect x="76" y="10" width="2" height="2"/><rect x="82" y="10" width="2" height="2"/></g></svg>
<svg style="left:516px;top:1060px" width="36" height="14" viewBox="0 0 36 14" fill="none" stroke="#bdbdbd" stroke-width="1"><circle cx="7" cy="7" r="5.500"/><path d="M4.800 4.800l4.400 4.400M9.200 4.800l-4.400 4.400"/><path d="M33 1.500l5.500 10.500h-11z"/><path d="M33 5.500v3.500M33 10v1"/></svg>
<div class="t" style="left:533px;top:1061px;font-size:12px;color:#bdbdbd">0</div><div class="t" style="left:560px;top:1061px;font-size:12px;color:#bdbdbd">0</div>
<div class="t" style="left:1617px;top:1060px;font-size:12px;letter-spacing:-0.400px;color:#a4a4a4">行 15，列</div>
<div class="abs" style="left:1666px;top:994px;width:200px;height:86px;background:#0cb64e"></div>
<div class="t" style="left:1671.500px;top:1025.500px;font-family:'Liberation Sans',sans-serif;font-size:31px;color:#fb1543;letter-spacing:1.200px;-webkit-text-stroke:0.500px #fb1543">会员免费下载</div>
</body>
</html>
